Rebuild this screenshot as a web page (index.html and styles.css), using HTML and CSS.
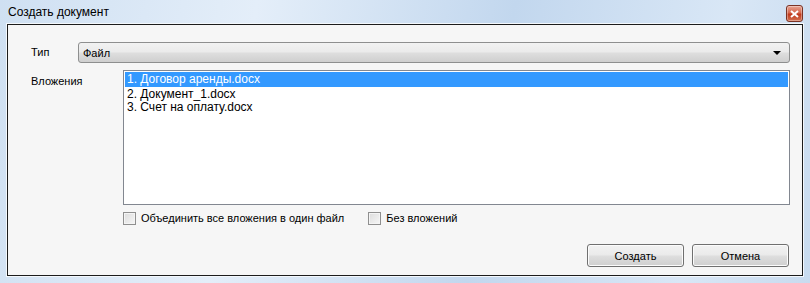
FILE: index.html
```html
<!DOCTYPE html>
<html lang="ru">
  <head>
    <meta charset="UTF-8" />
    <title>Создать документ</title>
    <link rel="stylesheet" href="styles.css">
  </head>
  <body>
    <div class="window">
      <div class="titlebar">
        <span class="title">Создать документ</span>
        <button class="close-btn" title="Закрыть">
          <svg width="9" height="8" viewBox="0 0 9 8">
            <path d="M1 1 L8 7 M8 1 L1 7" stroke="#fff" stroke-width="2" />
          </svg>
        </button>
      </div>

      <div class="client">
        <div class="row">
          <label class="label type-label">Тип</label>
          <div class="combo">
            <span>Файл</span>
            <span class="arrow"></span>
          </div>
        </div>

        <div class="row attach-row">
          <label class="label attach-label">Вложения</label>
          <div class="attach-col">
            <ul class="listbox">
              <li class="selected">1. Договор аренды.docx</li>
              <li>2. Документ_1.docx</li>
              <li>3. Счет на оплату.docx</li>
            </ul>
            <div class="checks">
              <label class="check"><span class="box"></span>Объединить все вложения в один файл</label>
              <label class="check"><span class="box"></span>Без вложений</label>
            </div>
          </div>
        </div>

        <div class="buttons">
          <button class="button">Создать</button>
          <button class="button">Отмена</button>
        </div>
      </div>
    </div>
  </body>
</html>
```

FILE: styles.css
```css
body {
  margin: 0;
  font-family: "Liberation Sans", Arial, sans-serif;
  font-size: 11px;
  color: #000;
}
.window {
  width: 810px;
  height: 283px;
  box-sizing: border-box;
  padding: 0 7px 7px 7px;
  background: linear-gradient(100deg, #cfe0f2 0%, #e4eef9 30%, #c2d7ee 60%, #d9e7f6 85%, #c8dbef 100%);
  display: flex;
  flex-direction: column;
}
.titlebar {
  height: 24px;
  display: flex;
  align-items: flex-start;
  justify-content: space-between;
}
.title {
  font-size: 12px;
  margin-top: 5px;
  margin-left: 1px;
}
.close-btn {
  width: 17px;
  height: 17px;
  margin-top: 5px;
  padding: 0;
  border: 1px solid #7a3325;
  border-radius: 3px;
  background: linear-gradient(#e8a493 0%, #d4664c 45%, #c0391c 55%, #d3704f 100%);
  display: flex;
  align-items: center;
  justify-content: center;
  box-shadow: inset 0 0 0 1px rgba(255, 255, 255, 0.35);
}
.client {
  flex: 1;
  background-color: #f6f6f6;
  border: 1px solid #1c1c1c;
  box-shadow: 0 0 0 1px #f4f8fc;
  padding: 17px 12px 8px 23px;
  display: flex;
  flex-direction: column;
}
.row {
  display: flex;
}
.label {
  flex: none;
}
.type-label {
  width: 47px;
  line-height: 21px;
}
.combo {
  flex: 1;
  height: 21px;
  box-sizing: border-box;
  border: 1px solid #8e8f8f;
  border-radius: 3px;
  background: linear-gradient(#f2f2f2 0%, #ebebeb 45%, #dddddd 55%, #cfcfcf 100%);
  display: flex;
  align-items: center;
  justify-content: space-between;
  padding: 0 8px 0 4px;
}
.arrow {
  width: 0;
  height: 0;
  border-left: 4px solid transparent;
  border-right: 4px solid transparent;
  border-top: 4px solid #000;
}
.attach-row {
  margin-top: 7px;
}
.attach-label {
  width: 92px;
  margin-top: 5px;
}
.attach-col {
  flex: 1;
}
.listbox {
  margin: 0;
  padding: 1px;
  list-style: none;
  height: 135px;
  box-sizing: border-box;
  border: 1px solid #828790;
  background-color: #fff;
  font-size: 12px;
}
.listbox li {
  height: 13px;
  line-height: 14px;
  padding-left: 2px;
}
.listbox li.selected {
  background-color: #3399ff;
  color: #fff;
  height: 15px;
  line-height: 15px;
}
.checks {
  display: flex;
  gap: 24px;
  margin-top: 7px;
  height: 13px;
}
.check {
  display: flex;
  align-items: center;
  gap: 5px;
  line-height: 13px;
}
.box {
  width: 11px;
  height: 11px;
  border: 1px solid #8f8f8f;
  background: linear-gradient(135deg, #dcdcdc, #f6f6f6);
  box-shadow: inset 0 0 0 1px #f4f4f4;
}
.buttons {
  margin-top: auto;
  display: flex;
  justify-content: flex-end;
  gap: 8px;
  padding-right: 1px;
}
.button {
  width: 97px;
  height: 23px;
  font-family: "Liberation Sans", Arial, sans-serif;
  font-size: 11px;
  color: #000;
  border: 1px solid #707070;
  border-radius: 3px;
  background: linear-gradient(#f2f2f2 0%, #ebebeb 45%, #dddddd 55%, #cfcfcf 100%);
  box-shadow: inset 0 0 0 1px #fcfcfc;
  padding: 0;
}
```
